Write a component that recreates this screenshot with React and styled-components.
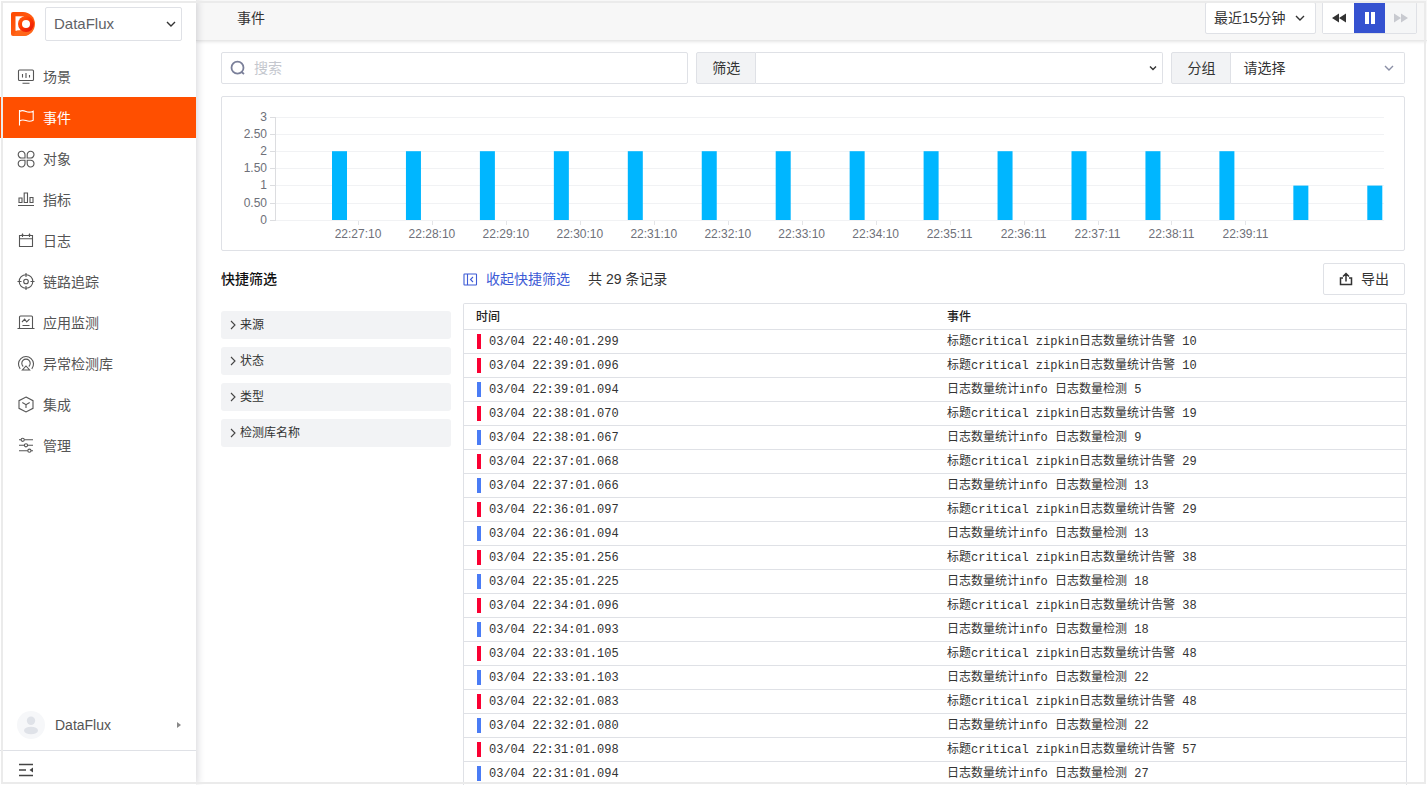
import React from "react";
import styled, { createGlobalStyle, css } from "styled-components";

const GlobalStyle = createGlobalStyle`
  *, *::before, *::after { box-sizing: border-box; }
  body {
    margin: 0;
    background: #fff;
    color: #333;
    font-family: "Liberation Sans", "Noto Sans CJK SC", sans-serif;
    font-size: 14px;
    line-height: 20px;
  }
  button, input, select { font: inherit; color: inherit; }
`;

const border = "1px solid #dfe1e6";

const Shell = styled.div`
  display: flex;
  height: 100vh;
  overflow: hidden;
`;

const Frame = styled.div`
  position: fixed;
  inset: 1px;
  border: 2px solid #ebebeb;
  pointer-events: none;
  z-index: 10;
`;

const Sidebar = styled.aside`
  display: flex;
  flex: none;
  flex-direction: column;
  width: 196px;
  background: #fff;
  box-shadow: 1px 0 8px rgba(40, 40, 60, 0.2);
  z-index: 2;
`;

const Brand = styled.div`
  display: flex;
  align-items: center;
  gap: 10px;
  height: 56px;
  padding: 0 14px 8px 11px;
`;

const SelectBox = styled.label`
  position: relative;
  display: flex;
  flex: ${(p) => (p.$grow ? 1 : "none")};
  min-width: 0;
  height: ${(p) => p.$height || 32}px;
  svg {
    position: absolute;
    top: 50%;
    right: ${(p) => p.$arrow || 10}px;
    margin-top: -6px;
    color: ${(p) => p.$arrowColor || "#333"};
    pointer-events: none;
  }
`;

const NativeSelect = styled.select`
  appearance: none;
  width: 100%;
  margin: 0;
  padding: 0 29px 0 8px;
  border: ${border};
  border-radius: ${(p) => (p.$attached ? "0 2px 2px 0" : "2px")};
  background: #fff;
  outline: none;
  ${(p) => p.$attached && css`border-left: 0; padding-left: 12px;`}
  ${(p) => p.$brand && css`font-size: 15px; color: #606266;`}
`;

const Nav = styled.nav`
  flex: 1;
`;

const NavItem = styled.a`
  display: flex;
  align-items: center;
  gap: 8px;
  height: 41px;
  padding-left: 17px;
  text-decoration: none;
  color: ${(p) => (p.$active ? "#fff" : "#555")};
  background: ${(p) => (p.$active ? "#ff4f00" : "transparent")};
`;

const User = styled.button`
  display: flex;
  align-items: center;
  gap: 10px;
  height: 52px;
  padding: 0 14px 0 17px;
  border: 0;
  border-bottom: ${border};
  background: none;
  color: #555;
  text-align: left;
  span { flex: 1; }
`;

const Collapse = styled.button`
  display: flex;
  align-items: center;
  height: 34px;
  padding: 4px 0 0 17px;
  border: 0;
  background: none;
  color: #444;
`;

const Main = styled.main`
  display: flex;
  flex: 1;
  flex-direction: column;
  min-width: 0;
`;

const TopBar = styled.header`
  display: flex;
  flex: none;
  align-items: flex-start;
  gap: 6px;
  height: 41px;
  padding: 2px 10px 0 41px;
  background: #f7f7f7;
  border-bottom: 1px solid #e8e8e8;
  box-shadow: 0 1px 3px rgba(0, 0, 0, 0.1);
`;

const PageTitle = styled.h1`
  flex: 1;
  margin: 0;
  font-size: 14px;
  font-weight: 400;
  line-height: 32px;
`;

const Playback = styled.div`
  display: flex;
  height: 32px;
  border: ${border};
  border-radius: 2px;
`;

const PlayButton = styled.button`
  display: grid;
  place-items: center;
  width: 31px;
  padding: 0;
  border: 0;
  color: ${(p) => (p.$active ? "#fff" : "#333")};
  background: ${(p) => (p.$active ? "#3552d0" : "#fff")};
  &:disabled { color: #c8cad0; background: #f5f6f7; }
`;

const Overview = styled.section`
  display: flex;
  flex: none;
  flex-direction: column;
  gap: 12px;
  padding: 11px 22px 0 25px;
`;

const Filters = styled.div`
  display: grid;
  grid-template-columns: 2fr 2fr 1fr;
  gap: 8px;
`;

const Search = styled.label`
  display: flex;
  align-items: center;
  gap: 8px;
  height: 32px;
  padding: 0 8px;
  border: ${border};
  border-radius: 2px;
  color: #7a7f99;
`;

const SearchInput = styled.input`
  flex: 1;
  min-width: 0;
  padding: 0;
  border: 0;
  outline: none;
  background: none;
  &::placeholder { color: #c4c7ce; opacity: 1; }
`;

const Field = styled.div`
  display: flex;
  min-width: 0;
`;

const FieldLabel = styled.label`
  display: flex;
  flex: none;
  align-items: center;
  justify-content: center;
  width: 60px;
  height: 32px;
  border: ${border};
  border-radius: 2px 0 0 2px;
  background: #f2f3f5;
`;

const ChartCard = styled.figure`
  margin: 0;
  border: ${border};
  border-radius: 2px;
  svg {
    display: block;
    width: 100%;
    height: auto;
  }
  text { font-size: 12px; fill: #6e7079; }
`;

const Content = styled.section`
  display: flex;
  flex: 1;
  gap: 12px;
  min-height: 0;
  padding: 12px 20px 0 25px;
`;

const QuickFilters = styled.aside`
  display: flex;
  flex: none;
  flex-direction: column;
  gap: 8px;
  width: 230px;
`;

const QuickTitle = styled.h2`
  margin: 0 0 8px;
  font-size: 14px;
  font-weight: 500;
  line-height: 32px;
  color: #111;
`;

const Facet = styled.button`
  display: flex;
  flex: none;
  align-items: center;
  gap: 4px;
  height: 28px;
  padding: 0 9px;
  border: 0;
  border-radius: 3px;
  background: #f2f3f5;
  font-size: 12px;
`;

const Records = styled.div`
  display: flex;
  flex: 1;
  flex-direction: column;
  gap: 8px;
  min-width: 0;
`;

const Toolbar = styled.div`
  display: flex;
  flex: none;
  align-items: center;
  gap: 18px;
  height: 32px;
  padding-right: 2px;
`;

const LinkButton = styled.button`
  display: flex;
  align-items: center;
  gap: 8px;
  padding: 0;
  border: 0;
  background: none;
  color: #3d5bd6;
`;

const Total = styled.span`
  flex: 1;
`;

const ExportButton = styled.button`
  display: flex;
  align-items: center;
  justify-content: center;
  gap: 8px;
  width: 82px;
  height: 32px;
  border: ${border};
  border-radius: 2px;
  background: #fff;
`;

const TableBox = styled.div`
  flex: 1;
  min-height: 0;
  overflow: hidden;
  border: ${border};
  border-bottom: 0;
  border-radius: 2px 2px 0 0;
`;

const Table = styled.table`
  width: 100%;
  table-layout: fixed;
  border-spacing: 0;
  font-size: 12px;
  line-height: 16px;
  text-align: left;
`;

const Th = styled.th`
  height: 26px;
  padding: 0 12px;
  border-bottom: ${border};
  color: #222;
  font-weight: 500;
`;

const Td = styled.td`
  height: 24px;
  padding: 0 12px;
  border-bottom: ${border};
  font-family: "Liberation Mono", "Noto Sans CJK SC", monospace;
  white-space: nowrap;
`;

const TimeCell = styled.div`
  display: flex;
  align-items: center;
  gap: 8px;
  padding-left: 1px;
`;

const Level = styled.i`
  width: 4px;
  height: 15px;
  background: ${(p) => (p.$critical ? "#fa0032" : "#4a7cf5")};
`;

const Svg = ({ size = 18, children, ...rest }) => (
  <svg width={size} height={size} viewBox={`0 0 ${size} ${size}`} fill="none" stroke="currentColor" strokeWidth="1.1" aria-hidden="true" {...rest}>
    {children}
  </svg>
);

const Chevron = ({ small }) => (
  <Svg size={12} strokeWidth="1.400">
    <path d={small ? "M3 4.500l3 3 3-3" : "M2 4l4 4 4-4"} />
  </Svg>
);

const Logo = () => (
  <svg width="24" height="24" viewBox="0 0 24 24" aria-label="DataFlux" role="img">
    <defs>
      <linearGradient id="body" x1="0" y1="0" x2="1" y2="1">
        <stop offset="0" stopColor="#ff4800" />
        <stop offset="1" stopColor="#ff6d1f" />
      </linearGradient>
      <linearGradient id="ring" x1="0" y1="0" x2="0.800" y2="1">
        <stop offset="0" stopColor="#ff6414" />
        <stop offset="0.500" stopColor="#ff3c00" />
        <stop offset="1" stopColor="#e8150c" />
      </linearGradient>
    </defs>
    <path d="M2 0h10a12 12 0 0 1 0 24H2a2 2 0 0 1-2-2V2a2 2 0 0 1 2-2z" fill="url(#body)" />
    <path d="M4.500 4.300H13v14.500H4.500z" fill="#fff" />
    <path d="M2 24l4-5.500L12 18l10 .5A12 12 0 0 1 12 24z" fill="#ff661a" />
    <circle cx="15" cy="12" r="8" fill="url(#ring)" />
    <circle cx="15" cy="12" r="4" fill="#fff" />
  </svg>
);

const navIcons = {
  scene: (
    <>
      <rect x="1.500" y="2" width="15" height="10.500" rx="1" />
      <path d="M5.500 6v3.500M9 5v5M12.500 7v2.500M5.500 15.200h7" />
    </>
  ),
  event: <path d="M2.500 1v15.500M2.500 2.500c3-1.800 4.500-.8 6.500 0s4.500 1 7.200-.3v9c-2.700 1.600-5 1.200-7.200.4s-4-1.200-6.500.4" />,
  object: (
    <path d="M8 8V4.700A3.400 3.400 0 1 0 4.600 8H8zM10.200 8V4.700A3.400 3.400 0 1 1 13.600 8h-3.400zM8 10.200v3.300a3.400 3.400 0 1 1-3.400-3.300H8zM10.200 10.200v3.300a3.400 3.400 0 1 0 3.400-3.300h-3.400z" />
  ),
  metric: <path d="M1 14.500h16M2 7h3v4.500H2zM7.200 2h3.300v9.500H7.200zM13 6.500h3v5h-3z" />,
  log: <path d="M2.500 3.500h13v11h-13zM2.500 6.800h13M5.500 1.500V5M12.500 1.500V5M4.500 3h2M11.500 3h2" />,
  trace: (
    <>
      <circle cx="9" cy="8.500" r="6.800" />
      <circle cx="9" cy="8.500" r="2.300" />
      <path d="M9 0v4M9 13v4M.5 8.500h4M13.500 8.500h4" />
    </>
  ),
  apm: <path d="M2.500 14V3a1 1 0 0 1 1-1h11a1 1 0 0 1 1 1v11M.5 14.500h17M5 8l2.700-2.800 2 2.800 2.800-2.800M5.500 11.500h7" />,
  anomaly: <path d="M3.200 13.800a7.500 7.500 0 1 1 11.600 0M6.200 11.500a4.200 4.200 0 1 1 5.600 0M9 11l3.600 4H5.400z" />,
  integration: <path d="M9 1l7 3.700v7.600L9 16l-7-3.700V4.700zM5.300 6.600L9 8.700l3.700-2.100M9 8.700V12" />,
  manage: (
    <>
      <path d="M2 2.800h2M7.300 2.800H16M2 8.300h5.500M10.700 8.300H16M2 13.700h8.800M14 13.700h2" />
      <circle cx="5.700" cy="2.800" r="1.600" />
      <circle cx="9" cy="8.300" r="1.600" />
      <circle cx="12.400" cy="13.700" r="1.600" />
    </>
  ),
};

const navItems = [
  ["scene", "场景"],
  ["event", "事件"],
  ["object", "对象"],
  ["metric", "指标"],
  ["log", "日志"],
  ["trace", "链路追踪"],
  ["apm", "应用监测"],
  ["anomaly", "异常检测库"],
  ["integration", "集成"],
  ["manage", "管理"],
];

const ticks = [
  "22:27:10", "22:28:10", "22:29:10", "22:30:10", "22:31:10", "22:32:10", "22:33:10",
  "22:34:10", "22:35:11", "22:36:11", "22:37:11", "22:38:11", "22:39:11",
];
const values = [2, 2, 2, 2, 2, 2, 2, 2, 2, 2, 2, 2, 2, 1, 1];
const levels = [["3", 20], ["2.50", 37], ["2", 54], ["1.50", 71], ["1", 88], ["0.50", 106], ["0", 123]];

const Chart = () => (
  <svg viewBox="0 0 1182 153" role="img" aria-label="事件">
    {levels.map(([label, y]) => (
      <g key={label}>
        <path d={`M53 ${y + 0.5}H1162`} stroke="#f1f2f4" />
        <path d={`M48 ${y + 0.5}h5`} stroke="#dcdde0" />
        <text x="45" y={y + 4} textAnchor="end">{label}</text>
      </g>
    ))}
    <path d="M53.500 20v104" stroke="#dcdde0" />
    {values.map((v, i) => (
      <rect key={i} x={110 + i * 73.95} y={123 - v * 34.4} width="15" height={v * 34.4} fill="#00b6ff" />
    ))}
    {ticks.map((t, i) => (
      <g key={t}>
        <path d={`M${Math.round(136 + i * 73.95) + 0.5} 124v4`} stroke="#e4e5e8" />
        <text x={136 + i * 73.95} y="141" textAnchor="middle">{t}</text>
      </g>
    ))}
  </svg>
);

const critical = (n) => `标题critical zipkin日志数量统计告警 ${n}`;
const info = (n) => `日志数量统计info 日志数量检测 ${n}`;
const events = [
  ["22:40:01.299", true, 10],
  ["22:39:01.096", true, 10],
  ["22:39:01.094", false, 5],
  ["22:38:01.070", true, 19],
  ["22:38:01.067", false, 9],
  ["22:37:01.068", true, 29],
  ["22:37:01.066", false, 13],
  ["22:36:01.097", true, 29],
  ["22:36:01.094", false, 13],
  ["22:35:01.256", true, 38],
  ["22:35:01.225", false, 18],
  ["22:34:01.096", true, 38],
  ["22:34:01.093", false, 18],
  ["22:33:01.105", true, 48],
  ["22:33:01.103", false, 22],
  ["22:32:01.083", true, 48],
  ["22:32:01.080", false, 22],
  ["22:31:01.098", true, 57],
  ["22:31:01.094", false, 27],
];

export default function App() {
  return (
    <>
      <GlobalStyle />
      <Shell>
        <Sidebar>
          <Brand>
            <Logo />
            <SelectBox $grow $height={34} $arrow={5}>
              <NativeSelect $brand aria-label="DataFlux">
                <option>DataFlux</option>
              </NativeSelect>
              <Chevron />
            </SelectBox>
          </Brand>
          <Nav>
            {navItems.map(([icon, label]) => (
              <NavItem key={icon} href={`#${icon}`} $active={icon === "event"}>
                <Svg>{navIcons[icon]}</Svg>
                {label}
              </NavItem>
            ))}
          </Nav>
          <User>
            <svg width="28" height="28" viewBox="0 0 28 28" aria-hidden="true">
              <circle cx="14" cy="14" r="14" fill="#f6f7f9" />
              <circle cx="14" cy="9.800" r="4.200" fill="#dfe2e8" />
              <ellipse cx="14" cy="19.500" rx="7" ry="3.800" fill="#dfe2e8" />
            </svg>
            <span>DataFlux</span>
            <svg width="6" height="8" viewBox="0 0 6 8" aria-hidden="true">
              <path d="M1 1l4 3-4 3z" fill="#888" />
            </svg>
          </User>
          <Collapse aria-label="收起">
            <Svg strokeWidth="1.300">
              <path d="M2 3.500h14M2 9h7M2 14.500h14" />
              <path d="M16 6.500v5L12.500 9z" fill="currentColor" stroke="none" />
            </Svg>
          </Collapse>
        </Sidebar>

        <Main>
          <TopBar>
            <PageTitle>事件</PageTitle>
            <SelectBox>
              <NativeSelect aria-label="时间范围">
                <option>最近15分钟</option>
              </NativeSelect>
              <Chevron />
            </SelectBox>
            <Playback>
              <PlayButton aria-label="后退">
                <svg width="14" height="10" viewBox="0 0 14 10" fill="currentColor" aria-hidden="true">
                  <path d="M7 .5v9L0 5zM14 .5v9L7 5z" />
                </svg>
              </PlayButton>
              <PlayButton $active aria-label="暂停">
                <svg width="10" height="12" viewBox="0 0 10 12" fill="currentColor" aria-hidden="true">
                  <path d="M0 0h4v12H0zM6 0h4v12H6z" />
                </svg>
              </PlayButton>
              <PlayButton disabled aria-label="前进">
                <svg width="14" height="10" viewBox="0 0 14 10" fill="currentColor" aria-hidden="true">
                  <path d="M0 .5v9L7 5zM7 .5v9L14 5z" />
                </svg>
              </PlayButton>
            </Playback>
          </TopBar>

          <Overview>
            <Filters>
              <Search>
                <Svg size={16} strokeWidth="1.800">
                  <circle cx="7.500" cy="7.700" r="6" />
                  <path d="M11.500 12l2.500 2" />
                </Svg>
                <SearchInput placeholder="搜索" aria-label="搜索" />
              </Search>
              <Field>
                <FieldLabel htmlFor="filter">筛选</FieldLabel>
                <SelectBox as="div" $grow $arrow={4}>
                  <NativeSelect id="filter" $attached />
                  <Chevron small />
                </SelectBox>
              </Field>
              <Field>
                <FieldLabel htmlFor="group">分组</FieldLabel>
                <SelectBox as="div" $grow $arrowColor="#8a8fa6">
                  <NativeSelect id="group" $attached>
                    <option>请选择</option>
                  </NativeSelect>
                  <Chevron />
                </SelectBox>
              </Field>
            </Filters>
            <ChartCard>
              <Chart />
            </ChartCard>
          </Overview>

          <Content>
            <QuickFilters>
              <QuickTitle>快捷筛选</QuickTitle>
              {["来源", "状态", "类型", "检测库名称"].map((name) => (
                <Facet key={name}>
                  <svg width="6" height="10" viewBox="0 0 6 10" fill="none" stroke="#444" strokeWidth="1.100" aria-hidden="true">
                    <path d="M1 1l4 4-4 4" />
                  </svg>
                  {name}
                </Facet>
              ))}
            </QuickFilters>
            <Records>
              <Toolbar>
                <LinkButton>
                  <Svg size={15}>
                    <rect x="1" y="2" width="12.500" height="11" rx=".5" />
                    <path d="M4.500 2v11M10 5L7.500 7.500 10 10" />
                  </Svg>
                  收起快捷筛选
                </LinkButton>
                <Total>共 29 条记录</Total>
                <ExportButton>
                  <Svg size={14} strokeWidth="1.500">
                    <path d="M4 6H1.500v6.500h11V6H10M7 9.500V1.800M4 4.500l3-3 3 3" />
                  </Svg>
                  导出
                </ExportButton>
              </Toolbar>
              <TableBox>
                <Table>
                  <thead>
                    <tr>
                      <Th>时间</Th>
                      <Th>事件</Th>
                    </tr>
                  </thead>
                  <tbody>
                    {events.map(([time, isCritical, count]) => (
                      <tr key={time}>
                        <Td>
                          <TimeCell>
                            <Level $critical={isCritical} />
                            03/04 {time}
                          </TimeCell>
                        </Td>
                        <Td>{isCritical ? critical(count) : info(count)}</Td>
                      </tr>
                    ))}
                  </tbody>
                </Table>
              </TableBox>
            </Records>
          </Content>
        </Main>
      </Shell>
      <Frame />
    </>
  );
}
